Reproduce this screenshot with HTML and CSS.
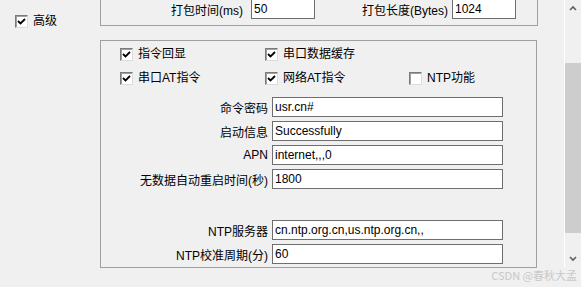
FILE: index.html
```html
<!DOCTYPE html>
<html lang="zh-CN">

<head>
    <meta charset="UTF-8">
    <meta name="viewport" content="width=device-width, initial-scale=1.0">
    <title>高级设置</title>
    <link rel="stylesheet" href="styles.css">
</head>

<body>
    <div class="screen">
        <div class="pane">
            <div class="side">
                <label class="check">
                    <span class="check__box check__box--on"><svg viewBox="0 0 11 11"><polyline points="2,5 4.5,7.5 9,3"/></svg></span>
                    <span class="check__text">高级</span>
                </label>
            </div>
            <div class="groups">
                <div class="group group--top">
                    <div class="pack">
                        <span class="pack__label">打包时间(ms)</span>
                        <input class="field field--short" type="text" value="50">
                        <span class="pack__label pack__label--second">打包长度(Bytes)</span>
                        <input class="field field--short" type="text" value="1024">
                    </div>
                </div>
                <div class="group group--main">
                    <div class="checks">
                        <label class="check">
                            <span class="check__box check__box--on"><svg viewBox="0 0 11 11"><polyline points="2,5 4.5,7.5 9,3"/></svg></span>
                            <span class="check__text">指令回显</span>
                        </label>
                        <label class="check">
                            <span class="check__box check__box--on"><svg viewBox="0 0 11 11"><polyline points="2,5 4.5,7.5 9,3"/></svg></span>
                            <span class="check__text">串口数据缓存</span>
                        </label>
                        <span></span>
                        <label class="check">
                            <span class="check__box check__box--on"><svg viewBox="0 0 11 11"><polyline points="2,5 4.5,7.5 9,3"/></svg></span>
                            <span class="check__text">串口AT指令</span>
                        </label>
                        <label class="check">
                            <span class="check__box check__box--on"><svg viewBox="0 0 11 11"><polyline points="2,5 4.5,7.5 9,3"/></svg></span>
                            <span class="check__text">网络AT指令</span>
                        </label>
                        <label class="check">
                            <span class="check__box"></span>
                            <span class="check__text">NTP功能</span>
                        </label>
                    </div>
                    <div class="form">
                        <div class="form__row">
                            <span class="form__label">命令密码</span>
                            <input class="field" type="text" value="usr.cn#">
                        </div>
                        <div class="form__row">
                            <span class="form__label">启动信息</span>
                            <input class="field" type="text" value="Successfully">
                        </div>
                        <div class="form__row">
                            <span class="form__label">APN</span>
                            <input class="field" type="text" value="internet,,,0">
                        </div>
                        <div class="form__row">
                            <span class="form__label">无数据自动重启时间(秒)</span>
                            <input class="field" type="text" value="1800">
                        </div>
                        <div class="form__row form__row--spaced">
                            <span class="form__label">NTP服务器</span>
                            <input class="field" type="text" value="cn.ntp.org.cn,us.ntp.org.cn,,">
                        </div>
                        <div class="form__row">
                            <span class="form__label">NTP校准周期(分)</span>
                            <input class="field" type="text" value="60">
                        </div>
                    </div>
                </div>
            </div>
        </div>
        <div class="scrollbar">
            <div class="scrollbar__btn"><svg viewBox="0 0 16 17"><polyline points="5,10 8,7 11,10"/></svg></div>
            <div class="scrollbar__track">
                <div class="scrollbar__thumb"></div>
            </div>
            <div class="scrollbar__btn"><svg viewBox="0 0 16 17"><polyline points="5,7 8,10 11,7"/></svg></div>
        </div>
    </div>
    <div class="watermark">CSDN @春秋大孟</div>
</body>

</html>
```

FILE: styles.css
```css
* {
    margin: 0;
    padding: 0;
    box-sizing: border-box;
}

body {
    position: relative;
    height: 287px;
    overflow: hidden;
    background: #f0f0f0;
    color: #000;
    font-family: "Liberation Sans", "Noto Sans CJK SC", sans-serif;
    font-size: 12px;
}

.screen {
    display: flex;
    height: 267px;
}

.pane {
    display: flex;
    width: 564px;
}

.side {
    width: 100px;
    padding: 15px 0 0 15px;
}

.check {
    display: flex;
    align-items: center;
    height: 13px;
}

.check__box {
    display: flex;
    width: 13px;
    height: 13px;
    background: #fff;
    border: 1px solid;
    border-color: #7a7a7a #dcdcdc #dcdcdc #7a7a7a;
    box-shadow: inset 1px 1px 0 #a0a0a0;
}

.check__box svg {
    width: 11px;
    height: 11px;
    fill: none;
    stroke: #000;
    stroke-width: 1.8;
}

.check__text {
    margin-left: 5px;
    line-height: 13px;
}

.groups {
    width: 438px;
}

.group {
    border: 1px solid #a0a0a0;
}

.group--top {
    margin-top: -1px;
    height: 27px;
    border-top: none;
}

.pack {
    display: flex;
    align-items: center;
    height: 20px;
    padding-left: 70px;
}

.pack__label {
    margin-right: 8px;
}

.pack__label--second {
    margin-left: 47px;
    margin-right: 4px;
}

.field {
    width: 231px;
    height: 20px;
    padding: 0 2px;
    border: 1px solid #6e6e6e;
    background: #fff;
    color: #000;
    font-family: "Liberation Sans", "Noto Sans CJK SC", sans-serif;
    font-size: 12px;
    outline: none;
}

.field--short {
    width: 64px;
}

.group--main {
    width: 437px;
    margin-top: 14px;
    padding: 7px 0 3px 19px;
}

.checks {
    display: grid;
    grid-template-columns: 145px 144px auto;
    row-gap: 11px;
}

.form {
    display: flex;
    flex-direction: column;
    gap: 4px;
    margin-top: 12px;
    margin-left: -19px;
}

.form__row {
    display: flex;
    align-items: center;
}

.form__row--spaced {
    margin-top: 27px;
}

.form__label {
    width: 169px;
    padding-right: 2px;
    text-align: right;
    white-space: nowrap;
}

.form__row .field {
    margin-left: 2px;
}

.scrollbar {
    display: flex;
    flex-direction: column;
    width: 17px;
    border-left: 1px solid #fff;
    background: #f0f0f0;
}

.scrollbar__btn {
    height: 17px;
}

.scrollbar__btn svg {
    width: 16px;
    height: 17px;
    fill: none;
    stroke: #606060;
    stroke-width: 1.6;
}

.scrollbar__track {
    flex: 1;
}

.scrollbar__thumb {
    width: 16px;
    height: 170px;
    margin-top: 46px;
    background: #cdcdcd;
}

.watermark {
    position: absolute;
    right: 4px;
    bottom: 5px;
    color: #c8c8c8;
    font-family: "Noto Sans CJK SC", sans-serif;
    font-size: 11px;
    line-height: 13px;
}
```
